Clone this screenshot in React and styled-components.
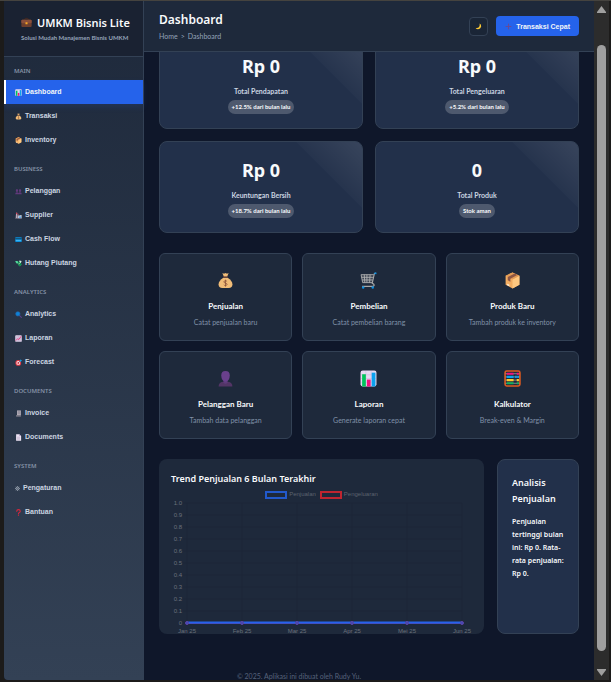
import React from "react";
import styled, { createGlobalStyle, css } from "styled-components";

const compact = `Lato, "Noto Sans", sans-serif`;
const plain = `"Liberation Sans", Arial, sans-serif`;

const GlobalStyle = createGlobalStyle`
  *, *::before, *::after { box-sizing: border-box; }
  body {
    margin: 0;
    background: #1c1b1a;
    font-family: "Noto Sans", "Open Sans", sans-serif;
    color: #f8fafc;
  }
  h1, h2, h3, p, ul { margin: 0; padding: 0; }
  ul { list-style: none; }
  button { font-family: inherit; cursor: pointer; }
  a { color: inherit; text-decoration: none; }
`;

/* ---------- icons ---------- */

const Svg = styled.svg`
  display: block;
  flex: none;
  width: ${(p) => p.$size}px;
  height: ${(p) => p.$size}px;
`;

const icons = {
  briefcase: (
    <>
      <path d="M11 9V6.500q0-2.500 2.500-2.500h5q2.500 0 2.500 2.500V9" fill="none" stroke="#4a2b20" strokeWidth="2.500" />
      <rect x="1" y="8" width="30" height="21" rx="3" fill="#6d3f2e" />
      <path d="M1 11q0-3 3-3h24q3 0 3 3v4q0 3-3 3H4q-3 0-3-3z" fill="#8a4f3a" />
      <rect x="13" y="15" width="6" height="6" rx="1" fill="#f9a825" />
    </>
  ),
  chart: (
    <>
      <rect x="1" y="1" width="30" height="30" rx="4" fill="#e6daf2" />
      <path d="M2 9h28M2 16h28M2 23h28M11 2v28M21 2v28" stroke="#c9b8dc" strokeWidth="1" />
      <rect x="4" y="8" width="7" height="23" fill="#00c55c" />
      <rect x="13" y="18" width="7" height="13" fill="#f3127f" />
      <rect x="22" y="5" width="7" height="26" fill="#0ba2ee" />
    </>
  ),
  money: (
    <>
      <path d="M10 2q3 2 6 0 3 2 6 0l-3 7h-6z" fill="#f2bd78" />
      <path d="M12 11h8q9 6 9 12 0 7-7 7H10q-7 0-7-7 0-6 9-12z" fill="#f2bd78" />
      <path d="M12 9.500h8" stroke="#7d4533" strokeWidth="2" strokeLinecap="round" />
      <path d="M19 18q-1-1.500-3-1.500-3 0-3 2T16 21t3 2.300T16 25.500q-2.500 0-3-1.500M16 14.500v13" fill="none" stroke="#8d5238" strokeWidth="1.500" />
    </>
  ),
  box: (
    <>
      <path d="M16 1l13 6v17l-13 7-13-7V7z" fill="#f3ad61" />
      <path d="M16 14l13-7v17l-13 7z" fill="#ffc880" />
      <path d="M3 7l13-6 13 6-13 7z" fill="#e39b55" />
      <path d="M7 9.500L20 3l5 2.500-13 7v6l-5-3z" fill="#8c5543" />
      <path d="M6 22l4 2v3l-4-2z" fill="#fff2df" />
    </>
  ),
  people: (
    <g fill="#61397b">
      <ellipse cx="9" cy="11" rx="5" ry="7" />
      <ellipse cx="23" cy="11" rx="5" ry="7" />
      <path d="M1 28q0-9 8-9 6 0 7 5 1-5 7-5 8 0 8 9z" />
    </g>
  ),
  factory: (
    <>
      <path d="M5 3h5l1 26H3z" fill="#b9a8b8" />
      <path d="M5 3h5v6H5zM12 8h4v5h-4z" fill="#e0384f" />
      <path d="M12 13h4l1 16h-6z" fill="#b9a8b8" />
      <path d="M15 17l15-3v16H15z" fill="#d6dfeb" />
      <path d="M19 20h8v6h-8z" fill="#2492e6" />
      <path d="M1 27h30v4H1z" fill="#686477" />
    </>
  ),
  card: (
    <>
      <rect x="1" y="6" width="30" height="21" rx="3" fill="#0b91de" />
      <path d="M1 10h30v5H1z" fill="#14435f" />
      <path d="M4 20h24v3H4z" fill="#74d4ff" />
    </>
  ),
  cash: (
    <>
      <path d="M9 9l12-2 10 14-9 9q-9-4-13-21z" fill="#14a85a" />
      <path d="M1 4l11 1 3 8-6 4q-5-3-8-13z" fill="#50d99a" />
      <path d="M20 2l10 3-3 9-7-4z" fill="#d1f5e1" />
      <path d="M13 14l6-4 7 10-6 5z" fill="#075c42" />
      <circle cx="19" cy="17" r="3" fill="#b8f3bc" />
    </>
  ),
  search: (
    <>
      <path d="M20 20l9 9" stroke="#5b3f8c" strokeWidth="5" strokeLinecap="round" />
      <circle cx="13" cy="13" r="10" fill="#0d83d7" stroke="#2462a7" strokeWidth="3" />
    </>
  ),
  trend: (
    <>
      <rect x="1" y="1" width="30" height="30" rx="4" fill="#dfd3e9" />
      <path d="M2 9h28M2 16h28M2 23h28M9 2v28M16 2v28M23 2v28" stroke="#b19cc3" strokeWidth="1.500" />
      <path d="M4 25l8-8 5 4L28 6" fill="none" stroke="#f0246e" strokeWidth="3.500" />
    </>
  ),
  target: (
    <>
      <circle cx="15" cy="18" r="13" fill="#e53946" />
      <circle cx="15" cy="18" r="8.500" fill="#fbe9ec" />
      <circle cx="15" cy="18" r="4.500" fill="#e53946" />
      <path d="M15 18L27 5" stroke="#2b3e59" strokeWidth="2" />
      <path d="M22 7l5-6 1 4 4 1-6 6-4-1z" fill="#13a8ee" />
    </>
  ),
  receipt: (
    <>
      <path d="M9 2h18v22H9z" fill="#b3aeb8" />
      <path d="M5 24h22v6H5z" fill="#8b8792" />
      <path d="M12 7h12M12 12h12M12 17h12" stroke="#747080" strokeWidth="2" />
    </>
  ),
  page: (
    <>
      <path d="M5 1h15l8 8v22H5z" fill="#eee4f4" />
      <path d="M20 1v8h8z" fill="#a993bd" />
      <path d="M9 14h14M9 19h14M9 24h14" stroke="#a592b5" strokeWidth="2" />
    </>
  ),
  gear: (
    <g fill="none" stroke="#cbd5e1">
      <circle cx="16" cy="16" r="10" strokeWidth="3" />
      <circle cx="16" cy="16" r="3" strokeWidth="3" />
      <path d="M16 1v6M16 25v6M1 16h6M25 16h6M5 5l5 5M22 22l5 5M27 5l-5 5M10 22l-5 5" strokeWidth="3" />
    </g>
  ),
  question: (
    <>
      <path d="M8 10q0-7 8-7t8 7q0 4-4 6.500-4 2-4 5.500" fill="none" stroke="#d7263d" strokeWidth="5" strokeLinecap="round" />
      <circle cx="16" cy="28" r="3" fill="#d7263d" />
    </>
  ),
  moon: (
    <path d="M21 2q9 5 7 15-3 11-14 12-7 0-11-6 12 2 16-6 4-6 2-15z" fill="#fcc934" />
  ),
  plus: <path d="M16 3v26M3 16h26" stroke="#6a4a94" strokeWidth="4.500" />,
  cart: (
    <>
      <path d="M2 5l22 0-2 15H5z" fill="#3f4654" />
      <path d="M2 5h24M3 10h22M4 15h20M5 20h18M2 5l3 15M8 5l1 15M13 5v15M19 5l-1 15" fill="none" stroke="#b3b3b3" strokeWidth="1.600" />
      <path d="M30 2l-3 1-4 18 3 2q2 3-2 4H4" fill="none" stroke="#a8a8a8" strokeWidth="2.200" />
      <path d="M27 1h4v3h-4z" fill="#0c8fe0" />
      <circle cx="6" cy="29" r="2.300" fill="#0c8fe0" />
      <circle cx="24" cy="29" r="2.300" fill="#0c8fe0" />
    </>
  ),
  person: (
    <>
      <path d="M3 31q0-9 10-9h6q10 0 10 9z" fill="#533566" />
      <path d="M12 18h8v6q-4 4-8 0z" fill="#5f3b7c" />
      <path d="M8 10q0-8 8-8t8 8q0 11-8 12-8-1-8-12z" fill="#69408c" />
    </>
  ),
  abacus: (
    <>
      <rect x="2" y="2" width="28" height="28" rx="3" fill="#1e293b" stroke="#df5b20" strokeWidth="3" />
      <path d="M3 7h26M3 13h26M3 19h26M3 25h26" stroke="#d5d5dd" strokeWidth="1" />
      <g strokeWidth="4">
        <path d="M5 7h13M24 7h4" stroke="#f3127f" />
        <path d="M5 13h13M21 13h3M25 13h3" stroke="#0ba2ee" />
        <path d="M5 19h13M24 19h4" stroke="#ffcb2d" />
        <path d="M5 25h13M24 25h4" stroke="#13b35f" />
      </g>
    </>
  ),
};

function Icon({ name, size }) {
  return (
    <Svg $size={size} viewBox="0 0 32 32" aria-hidden="true">
      {icons[name]}
    </Svg>
  );
}

/* ---------- window ---------- */

const Window = styled.div`
  display: flex;
  height: 100vh;
  padding: 1px 2px 2px 4px;
  background: #1c1b1a;
  box-shadow: inset 0 1px 0 #45433f;
`;

const Viewport = styled.div`
  flex: 1;
  min-width: 0;
  display: grid;
  grid-template-columns: 140px minmax(0, 1fr);
  grid-template-rows: auto auto;
  align-content: start;
  overflow: hidden;
  background: #0f172a;
  border-bottom-left-radius: 4px;
`;

const ScrollTrack = styled.div`
  flex: none;
  width: 15px;
  display: flex;
  flex-direction: column;
  align-items: center;
  justify-content: space-between;
  padding: 5px 0 4px;
  background: #2c2c2c;
`;

const ScrollThumb = styled.div`
  flex: 1;
  width: 9px;
  margin: 32px 0 18px;
  border-radius: 5px;
  background: #9f9f9f;
`;

const Arrow = styled.svg`
  display: block;
  flex: none;
  width: 9px;
  height: 7px;
  fill: #9f9f9f;
`;

/* ---------- sidebar ---------- */

const Sidebar = styled.aside`
  grid-area: 1 / 1 / 3 / 2;
  z-index: 2;
  min-height: calc(100vh - 3px);
  background: linear-gradient(180deg, #1e293b, #334155);
  border-right: 1px solid #334155;
`;

const Brand = styled.div`
  height: 56px;
  padding: 14px 0 0 17px;
  background: #1a2232;
  border-bottom: 1px solid #334155;
`;

const BrandName = styled.h2`
  display: flex;
  align-items: center;
  gap: 5px;
  font-size: 11px;
  line-height: 15px;
  font-weight: 600;
  white-space: nowrap;
`;

const BrandNote = styled.p`
  margin-top: 3px;
  font-family: ${compact};
  font-size: 6px;
  line-height: 9px;
  font-weight: 700;
  color: #94a3b8;
  white-space: nowrap;
`;

const NavTitle = styled.h3`
  height: ${(p) => (p.$first ? 23 : 27)}px;
  padding: ${(p) => (p.$first ? 9 : 12)}px 0 0 10px;
  font-size: 6px;
  line-height: 10px;
  font-weight: 600;
  color: #8592a6;
`;

const NavLink = styled.a`
  display: flex;
  align-items: center;
  gap: 3px;
  height: 24px;
  padding-left: 9px;
  border-left: 2px solid transparent;
  font-family: ${plain};
  font-size: 7px;
  line-height: 12px;
  font-weight: 700;
  color: #cbd5e1;
  ${(p) =>
    p.$active &&
    css`
      background: #2563eb;
      border-left-color: #fff;
      color: #f1f5f9;
      box-shadow: 0 3px 6px rgba(37, 99, 235, 0.15);
    `}
`;

/* ---------- main ---------- */

const Main = styled.main`
  grid-area: 1 / 2 / 2 / 3;
  min-width: 0;
`;

const TopBar = styled.header`
  position: relative;
  z-index: 1;
  display: flex;
  align-items: center;
  justify-content: space-between;
  height: 51px;
  padding: 0 15px;
  background: #1e293b;
  border-bottom: 1px solid #334155;
`;

const PageTitle = styled.h1`
  font-size: 12px;
  line-height: 16px;
  font-weight: 600;
`;

const Crumbs = styled.nav`
  display: flex;
  gap: 3px;
  margin-top: 3px;
  font-family: ${compact};
  font-size: 7px;
  line-height: 10px;
  color: #94a3b8;
`;

const Actions = styled.div`
  display: flex;
  align-items: center;
  gap: 8px;
`;

const ThemeButton = styled.button`
  display: grid;
  place-items: center;
  width: 19px;
  height: 19px;
  padding: 0;
  border: 1px solid #334155;
  border-radius: 4px;
  background: #1a2536;
`;

const QuickButton = styled.button`
  display: flex;
  align-items: center;
  justify-content: center;
  gap: 4px;
  height: 20px;
  padding: 0 9px;
  border: 0;
  border-radius: 4px;
  background: #2563eb;
  color: #f1f5f9;
  font-family: ${plain};
  font-size: 7px;
  font-weight: 700;
  white-space: nowrap;
`;

const Content = styled.div`
  display: flex;
  flex-direction: column;
  gap: 20px;
  margin-top: -15px;
  padding: 0 15px;
`;

const Stats = styled.section`
  display: grid;
  grid-template-columns: 1fr 1fr;
  gap: 12px;
`;

const StatCard = styled.article`
  display: flex;
  flex-direction: column;
  align-items: center;
  height: 92px;
  padding-top: 15px;
  border: 1px solid #334155;
  border-radius: 8px;
  background:
    linear-gradient(225deg, rgba(255, 255, 255, 0.1), rgba(255, 255, 255, 0.02) 46px, transparent 47px),
    #22304a;
`;

const StatValue = styled.p`
  font-size: 18px;
  line-height: 26px;
  font-weight: 700;
`;

const StatLabel = styled.p`
  margin-top: 7px;
  font-family: ${compact};
  font-size: 7px;
  line-height: 10px;
  font-weight: 700;
  color: #cbd5e1;
`;

const StatPill = styled.span`
  margin-top: 4px;
  padding: 0 4px;
  border-radius: 7px;
  background: #4e596e;
  font-family: ${compact};
  font-size: 6px;
  line-height: 14px;
  font-weight: 700;
`;

const Shortcuts = styled.section`
  display: grid;
  grid-template-columns: repeat(3, 1fr);
  gap: 10px;
`;

const Shortcut = styled.button`
  display: flex;
  flex-direction: column;
  align-items: center;
  height: 88px;
  padding: 18px 4px 0;
  border: 1px solid #334155;
  border-radius: 6px;
  background: #1e293b;
  color: #f8fafc;
  font-family: ${compact};
`;

const ShortcutName = styled.span`
  margin-top: 11px;
  font-size: 8px;
  line-height: 12px;
  font-weight: 700;
`;

const ShortcutNote = styled.span`
  margin-top: 5px;
  font-size: 7px;
  line-height: 10px;
  color: #8091a8;
`;

const Reports = styled.section`
  display: grid;
  grid-template-columns: minmax(0, 4fr) minmax(82px, 1fr);
  gap: 13px;
`;

const ChartCard = styled.article`
  height: 175px;
  padding: 13px 12px 0;
  overflow: hidden;
  border-radius: 8px;
  background: #1e293b;
`;

const ChartTitle = styled.h2`
  font-size: 9px;
  line-height: 14px;
  font-weight: 600;
`;

const Legend = styled.ul`
  display: flex;
  justify-content: center;
  gap: 4px;
  margin-top: 4px;
  font-family: ${plain};
  font-size: 6px;
  line-height: 9px;
  color: #5c636f;

  li {
    display: flex;
    align-items: center;
    gap: 2px;
  }
`;

const Swatch = styled.span`
  width: 22px;
  height: 8px;
  border: 2px solid ${(p) => p.$color};
  background: #1e293b;
`;

const Plot = styled.svg`
  display: block;
  width: 100%;
  height: auto;
  font-family: ${plain};
  font-size: 6px;
  fill: #6b717b;
`;

const InsightCard = styled.article`
  padding: 15px 10px 0 14px;
  border: 1px solid #334155;
  border-radius: 8px;
  background: #22304a;
`;

const InsightTitle = styled.h2`
  font-size: 9px;
  line-height: 16px;
  font-weight: 600;
`;

const InsightText = styled.p`
  margin-top: 8px;
  font-size: 7px;
  line-height: 13px;
  font-weight: 600;
`;

const Footer = styled.footer`
  grid-area: 2 / 1 / 3 / 3;
  padding-top: 38px;
  text-align: center;
  font-family: ${compact};
  font-size: 7px;
  line-height: 8px;
  color: #56627a;
`;

/* ---------- data ---------- */

const nav = [
  ["MAIN", [["chart", "Dashboard"], ["money", "Transaksi"], ["box", "Inventory"]]],
  ["BUSINESS", [["people", "Pelanggan"], ["factory", "Supplier"], ["card", "Cash Flow"], ["cash", "Hutang Piutang"]]],
  ["ANALYTICS", [["search", "Analytics"], ["trend", "Laporan"], ["target", "Forecast"]]],
  ["DOCUMENTS", [["receipt", "Invoice"], ["page", "Documents"]]],
  ["SYSTEM", [["gear", "Pengaturan"], ["question", "Bantuan"]]],
];

const stats = [
  ["Rp 0", "Total Pendapatan", "+12.5% dari bulan lalu"],
  ["Rp 0", "Total Pengeluaran", "+5.2% dari bulan lalu"],
  ["Rp 0", "Keuntungan Bersih", "+18.7% dari bulan lalu"],
  ["0", "Total Produk", "Stok aman"],
];

const shortcuts = [
  ["money", "Penjualan", "Catat penjualan baru"],
  ["cart", "Pembelian", "Catat pembelian barang"],
  ["box", "Produk Baru", "Tambah produk ke inventory"],
  ["person", "Pelanggan Baru", "Tambah data pelanggan"],
  ["chart", "Laporan", "Generate laporan cepat"],
  ["abacus", "Kalkulator", "Break-even & Margin"],
];

const months = ["Jan 25", "Feb 25", "Mar 25", "Apr 25", "Mei 25", "Jun 25"];
const ticks = ["1.0", "0.9", "0.8", "0.7", "0.6", "0.5", "0.4", "0.3", "0.2", "0.1", "0"];

function TrendPlot() {
  const x = (i) => 16 + i * 55;
  const y = (i) => 4 + i * 12;
  return (
    <Plot viewBox="0 0 301 135" role="img" aria-label="Trend Penjualan 6 Bulan Terakhir">
      {ticks.map((t, i) => (
        <g key={t}>
          <path d={`M12 ${y(i)}H291`} stroke="#1c2638" />
          <text x="11" y={y(i) + 2} textAnchor="end">{t}</text>
        </g>
      ))}
      {months.map((m, i) => (
        <g key={m}>
          <path d={`M${x(i)} 4V127`} stroke="#1c2638" />
          <text x={x(i)} y="134" textAnchor="middle">{m}</text>
        </g>
      ))}
      <path d="M16 124.500H291" stroke="#5a3f9c" />
      <path d="M16 123.500H291" stroke="#2563eb" strokeWidth="2" />
      {months.map((m, i) => (
        <circle key={m} cx={x(i)} cy="124" r="1.500" fill="#3c4dbb" stroke="#6043a3" />
      ))}
    </Plot>
  );
}

export default function App() {
  return (
    <>
      <GlobalStyle />
      <Window>
        <Viewport>
          <Sidebar>
            <Brand>
              <BrandName>
                <Icon name="briefcase" size={11} />
                UMKM Bisnis Lite
              </BrandName>
              <BrandNote>Solusi Mudah Manajemen Bisnis UMKM</BrandNote>
            </Brand>
            <nav aria-label="Menu">
              {nav.map(([title, items], s) => (
                <section key={title}>
                  <NavTitle $first={s === 0}>{title}</NavTitle>
                  {items.map(([icon, label]) => (
                    <NavLink
                      key={label}
                      href="#"
                      $active={label === "Dashboard"}
                      aria-current={label === "Dashboard" ? "page" : undefined}
                    >
                      <Icon name={icon} size={icon === "gear" ? 5 : 7} />
                      {label}
                    </NavLink>
                  ))}
                </section>
              ))}
            </nav>
          </Sidebar>

          <Main>
            <TopBar>
              <div>
                <PageTitle>Dashboard</PageTitle>
                <Crumbs aria-label="Breadcrumb">
                  <a href="#">Home</a>
                  <span>&gt;</span>
                  <span>Dashboard</span>
                </Crumbs>
              </div>
              <Actions>
                <ThemeButton type="button" aria-label="Mode gelap">
                  <Icon name="moon" size={7} />
                </ThemeButton>
                <QuickButton type="button">
                  <Icon name="plus" size={7} />
                  Transaksi Cepat
                </QuickButton>
              </Actions>
            </TopBar>

            <Content>
              <Stats>
                {stats.map(([value, label, note]) => (
                  <StatCard key={label}>
                    <StatValue>{value}</StatValue>
                    <StatLabel>{label}</StatLabel>
                    <StatPill>{note}</StatPill>
                  </StatCard>
                ))}
              </Stats>

              <Shortcuts>
                {shortcuts.map(([icon, name, note]) => (
                  <Shortcut key={name} type="button">
                    <Icon name={icon} size={17} />
                    <ShortcutName>{name}</ShortcutName>
                    <ShortcutNote>{note}</ShortcutNote>
                  </Shortcut>
                ))}
              </Shortcuts>

              <Reports>
                <ChartCard>
                  <ChartTitle>Trend Penjualan 6 Bulan Terakhir</ChartTitle>
                  <Legend>
                    <li><Swatch $color="#2259cc" />Penjualan</li>
                    <li><Swatch $color="#bf2530" />Pengeluaran</li>
                  </Legend>
                  <TrendPlot />
                </ChartCard>
                <InsightCard>
                  <InsightTitle>Analisis Penjualan</InsightTitle>
                  <InsightText>
                    Penjualan tertinggi bulan ini: Rp 0. Rata-rata penjualan: Rp 0.
                  </InsightText>
                </InsightCard>
              </Reports>
            </Content>
          </Main>

          <Footer>© 2025. Aplikasi ini dibuat oleh Rudy Yu.</Footer>
        </Viewport>

        <ScrollTrack aria-hidden="true">
          <Arrow viewBox="0 0 9 7"><path d="M4.500 0L9 6v1H0V6z" /></Arrow>
          <ScrollThumb />
          <Arrow viewBox="0 0 9 7"><path d="M4.500 7L9 1V0H0v1z" /></Arrow>
        </ScrollTrack>
      </Window>
    </>
  );
}
